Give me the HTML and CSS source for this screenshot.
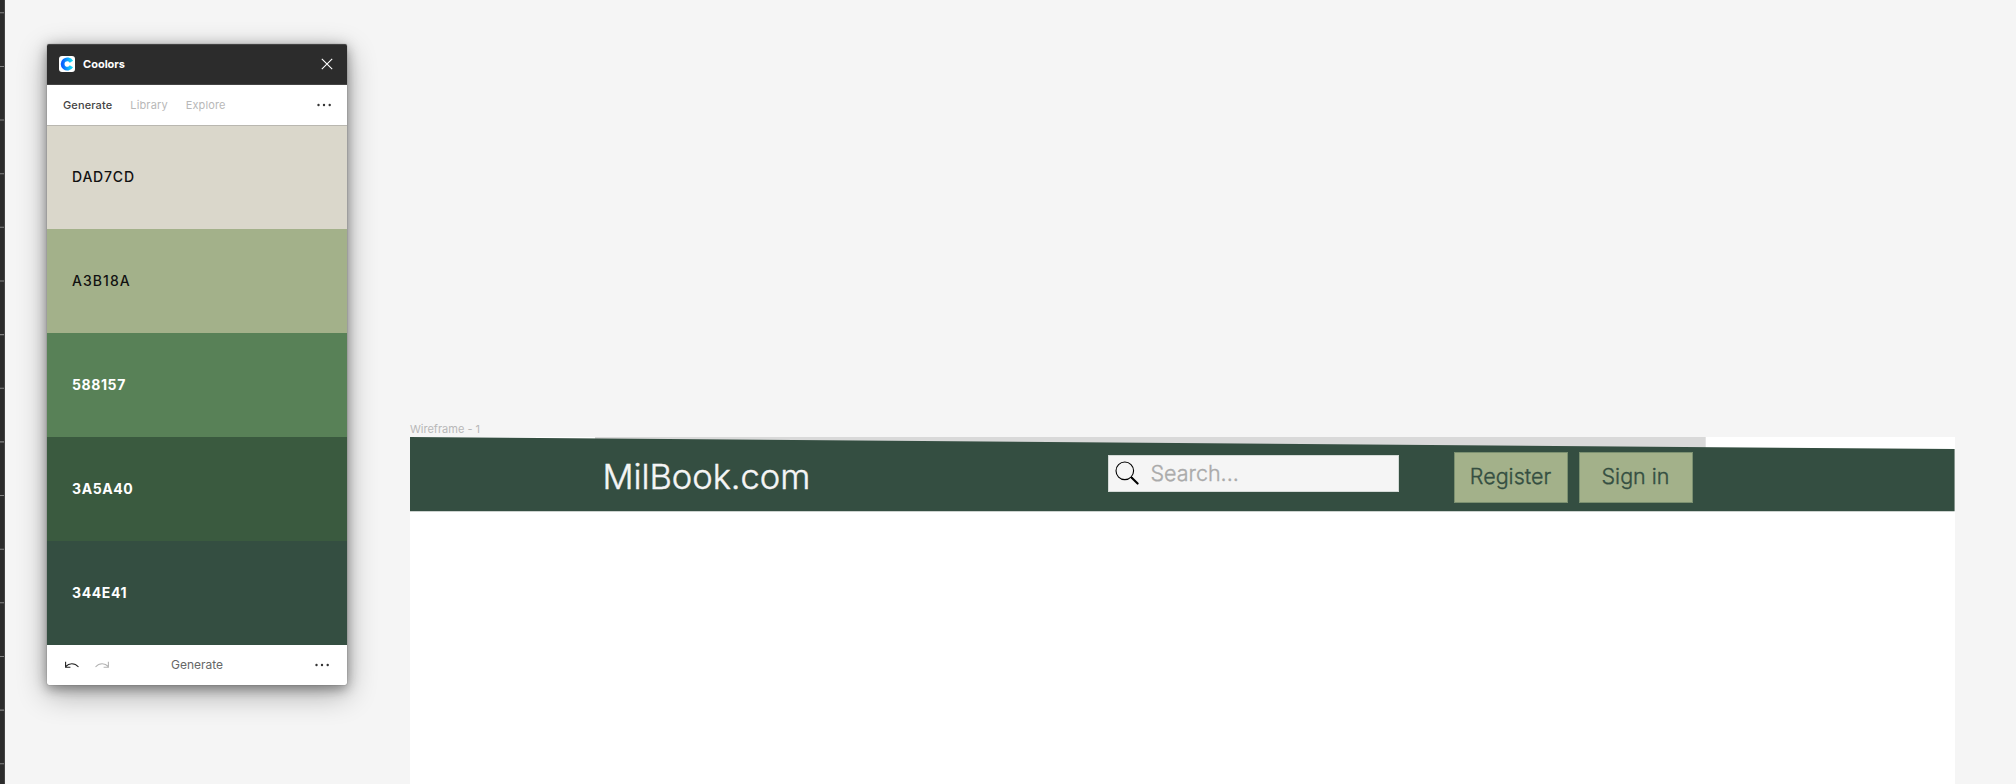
FILE: index.html
```
<!DOCTYPE html>
<html lang="en">
<head>
<meta charset="utf-8">
<title>MilBook wireframe</title>
<link rel="stylesheet" href="styles.css">
</head>
<body>
<div class="workspace">
  <aside class="ruler">
    <svg width="4" height="784" viewBox="0 0 4 784">
      <path d="M0 12.8h4M0 66.5h4M0 120h4M0 173.7h4M0 227.3h4M0 281h4M0 334.6h4M0 388.2h4M0 441.9h4M0 495.5h4M0 549.2h4M0 602.8h4M0 656.5h4M0 710.1h4M0 763.8h4" stroke="#828282" stroke-width="1.1"/>
    </svg>
  </aside>

  <section class="plugin">
    <header class="plugin-header">
      <svg class="logo" width="16" height="16" viewBox="0 0 16 16">
        <defs><linearGradient id="c" x1="0" x2="1" y1="0" y2="0"><stop offset="0" stop-color="#0a62ff"/><stop offset="1" stop-color="#10d5fb"/></linearGradient></defs>
        <rect width="16" height="16" rx="3" fill="#fff"/>
        <path d="M12.4 5.7A4.7 4.7 0 1 0 12.4 10.3" fill="none" stroke="url(#c)" stroke-width="3.8"/>
      </svg>
      <h1 class="plugin-title">Coolors</h1>
      <svg class="close" width="12" height="12" viewBox="0 0 12 12"><path d="M.8.8 11.2 11.2M11.2.8.8 11.2" stroke="#fff" stroke-width="1.1"/></svg>
    </header>
    <nav class="tabs">
      <span class="tab tab-active">Generate</span>
      <span class="tab tab-library">Library</span>
      <span class="tab">Explore</span>
      <svg class="dots" width="16" height="4" viewBox="0 0 16 4" fill="#333"><circle cx="2.5" cy="2" r="1.2"/><circle cx="8" cy="2" r="1.2"/><circle cx="13.7" cy="2" r="1.2"/></svg>
    </nav>
    <div class="swatches">
      <div class="swatch swatch-bone">DAD7CD</div>
      <div class="swatch swatch-sage">A3B18A</div>
      <div class="swatch swatch-fern">588157</div>
      <div class="swatch swatch-hunter">3A5A40</div>
      <div class="swatch swatch-pine">344E41</div>
    </div>
    <footer class="plugin-footer">
      <svg class="undo" width="16" height="8" viewBox="0 0 16 8" fill="none" stroke="#222" stroke-width="1.1"><path d="M1.6.8V6.2H6.4M1.6 5.6C5 2 10.5 1.5 14.5 6"/></svg>
      <svg class="redo" width="16" height="8" viewBox="0 0 16 8" fill="none" stroke="#b3b3b3" stroke-width="1.1"><path d="M14.4.8V6.2H9.6M14.4 5.6C11 2 5.5 1.5 1.5 6"/></svg>
      <span class="generate">Generate</span>
      <svg class="dots" width="16" height="4" viewBox="0 0 16 4" fill="#333"><circle cx="2.5" cy="2" r="1.2"/><circle cx="8" cy="2" r="1.2"/><circle cx="13.7" cy="2" r="1.2"/></svg>
    </footer>
  </section>

  <main class="frame">
    <div class="frame-label">Wireframe - 1</div>
    <div class="board">
      <div class="site-header">
        <svg class="header-shape" width="1545" height="75" viewBox="0 0 1545 75">
          <path d="M185 0H1295.7V20H185Z" fill="#d9d9d9"/>
          <path d="M0 .1 1544.6 12V74.3H0Z" fill="#344e41"/>
        </svg>
        <div class="brand">MilBook.com</div>
        <div class="search">
          <svg class="search-icon" width="24" height="24" viewBox="0 0 24 24" fill="none" stroke="#000"><circle cx="9.8" cy="9.8" r="8.8" stroke-width="1.1"/><path d="M16 16l1.6 1.4" stroke-width="1.4"/><path d="M17 17 22.6 22.6" stroke-width="2.1" stroke-linecap="round"/></svg>
          <span>Search...</span>
        </div>
        <div class="button button-register">Register</div>
        <div class="button button-signin">Sign in</div>
      </div>
    </div>
  </main>
</div>
</body>
</html>
```
FILE: styles.css
```
* { box-sizing: border-box; }
body {
  margin: 0;
  background: #f5f5f5;
  font-family: Inter, "Liberation Sans", sans-serif;
}
.workspace {
  display: flex;
  align-items: flex-start;
  height: 784px;
  overflow: hidden;
}
.ruler {
  width: 5px;
  height: 784px;
  flex: none;
  background: #2c2c2c;
  border-right: 1px solid #444;
}
.ruler svg { display: block; }

.plugin {
  width: 300px;
  flex: none;
  margin: 44px 0 0 42px;
  border-radius: 2px;
  background: #fff;
  box-shadow: 0 2px 14px rgba(0, 0, 0, .25), 0 9px 30px rgba(0, 0, 0, .32), 0 0 1px rgba(0, 0, 0, .6), 0 5px 10px rgba(0, 0, 0, .15);
}
.plugin-header {
  display: flex;
  align-items: center;
  height: 41px;
  padding: 0 14px 1px 12px;
  background: #2c2c2c;
  border-top: 1px solid #444;
  border-bottom: 1px solid #444;
  border-radius: 2px 2px 0 0;
}
.plugin-title {
  margin: 0 auto 0 8px;
  color: #fff;
  font-size: 11px;
  font-weight: 700;
}
.tabs {
  display: flex;
  align-items: center;
  height: 41px;
  padding: 0 15px 0 16px;
  border-bottom: 1px solid #b9b7b0;
  font-size: 11px;
  letter-spacing: .13px;
}
.tab { color: #b8b8b8; }
.tab-active { color: #444; font-weight: 500; }
.tab-library { margin: 0 18px; }
.dots { margin-left: auto; }
.swatches {
  display: grid;
  grid-template-rows: 103px repeat(4, 104px);
}
.swatch {
  display: flex;
  align-items: center;
  padding: 0 0 2px 25px;
  color: #fff;
  font-size: 14px;
  font-weight: 700;
  letter-spacing: .6px;
}
.swatch-bone { background: #dad7cb; color: #111; font-weight: 500; letter-spacing: .8px; }
.swatch-sage { background: #a3b18a; color: #111; font-weight: 500; letter-spacing: 1.05px; }
.swatch-fern { background: #588157; }
.swatch-hunter { background: #3a5a3f; }
.swatch-pine { background: #344e41; }
.plugin-footer {
  display: flex;
  align-items: center;
  height: 40px;
  padding: 0 17px;
}
.redo { margin-left: 14px; }
.generate {
  margin-left: 61px;
  padding-bottom: 1px;
  color: #666;
  font-size: 12px;
}

.frame {
  width: 1545px;
  flex: none;
  margin: 421px 0 0 62.5px;
}
.frame-label {
  height: 16px;
  padding-left: .5px;
  color: #b8b8b8;
  font-size: 11px;
  line-height: 17px;
}
.board {
  height: 347px;
  background: #fff;
}
.site-header {
  display: grid;
  grid-template-columns: 193px 505px 291px 55px 114px 11px 114px;
  align-items: start;
  height: 75px;
}
.header-shape {
  grid-area: 1 / 1 / 2 / -1;
  display: block;
}
.brand {
  grid-area: 1 / 2;
  color: #f5f5f5;
  font-size: 34.5px;
  font-weight: 300;
  letter-spacing: -.05px;
  line-height: 79px;
  -webkit-text-stroke: .45px #f5f5f5;
}
.search {
  grid-area: 1 / 3;
  display: flex;
  align-items: center;
  height: 37px;
  margin-top: 18px;
  padding: 0 6px 1px;
  border: 1px solid #d4dad7;
  background: #f5f5f5;
  color: #aaa;
  font-size: 21.5px;
  font-weight: 300;
  -webkit-text-stroke: .35px #aaa;
}
.search-icon { margin-right: 12px; }
.button {
  height: 51px;
  margin-top: 15px;
  border: 1px solid #7b9070;
  background: #a3b18a;
  color: #344e41;
  font-size: 21.5px;
  font-weight: 300;
  line-height: 47px;
  text-align: center;
  -webkit-text-stroke: .35px #344e41;
}
.button-register { grid-area: 1 / 5; }
.button-signin { grid-area: 1 / 7; }
```
